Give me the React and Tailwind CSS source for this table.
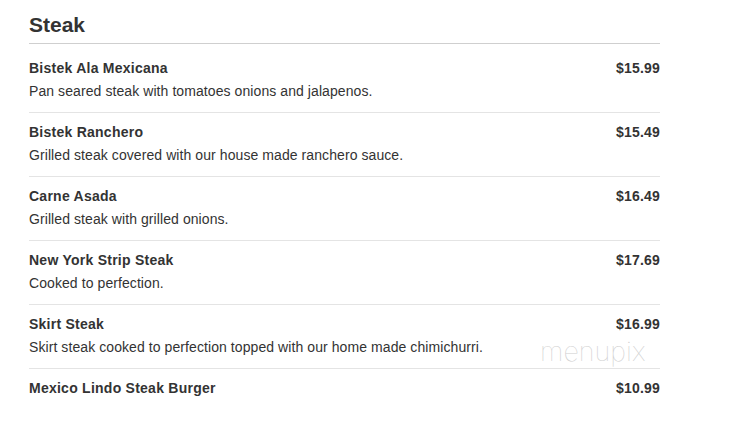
const items = [
  { name: 'Bistek Ala Mexicana', desc: 'Pan seared steak with tomatoes onions and jalapenos.', price: '$15.99' },
  { name: 'Bistek Ranchero', desc: 'Grilled steak covered with our house made ranchero sauce.', price: '$15.49' },
  { name: 'Carne Asada', desc: 'Grilled steak with grilled onions.', price: '$16.49' },
  { name: 'New York Strip Steak', desc: 'Cooked to perfection.', price: '$17.69' },
  { name: 'Skirt Steak', desc: 'Skirt steak cooked to perfection topped with our home made chimichurri.', price: '$16.99' },
  { name: 'Mexico Lindo Steak Burger', desc: '', price: '$10.99' },
];

export default function App() {
  return (
    <div className="relative w-[755px] h-[422px] overflow-hidden bg-white text-[#333] font-['Liberation_Sans',Arial,sans-serif]">
      <div className="ml-[29px] w-[631px]">
        <h2 className="pt-[13px] pb-[6px] text-[21px] leading-[24px] font-bold border-b border-[#cfcfcf]">Steak</h2>
        <div className="mt-[5px]">
          {items.map((it, i) => (
            <div
              key={it.name}
              className={`flex justify-between pt-[9px] pb-[11px] ${i > 0 ? 'border-t border-[#e4e4e4]' : ''}`}
            >
              <div>
                <div className="text-[14px] leading-[20px] font-bold tracking-[0.25px]">{it.name}</div>
                {it.desc && <div className="mt-[3px] text-[14px] leading-[20px] tracking-[0.08px]">{it.desc}</div>}
              </div>
              <div className="text-[14px] leading-[20px] font-bold tracking-[0.2px]">{it.price}</div>
            </div>
          ))}
        </div>
      </div>
      <div className="absolute left-[540px] top-[336px] text-[27px] leading-[32px] font-thin text-[#cfcfcf] font-['Inter',sans-serif]">
        menupix
      </div>
    </div>
  );
}
